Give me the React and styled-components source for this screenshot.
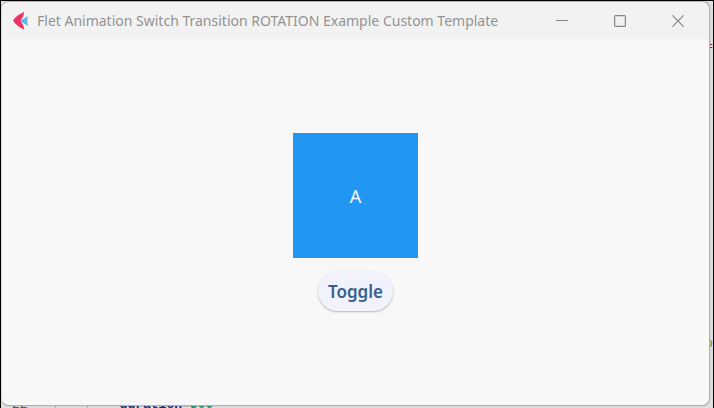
import React, { useState } from "react";
import styled, { createGlobalStyle } from "styled-components";

const GlobalStyle = createGlobalStyle`
  * { box-sizing: border-box; }
  html, body, #root { height: 100%; margin: 0; }
  body { overflow: hidden; font-family: "Noto Sans", "Open Sans", sans-serif; }
`;

const Desktop = styled.div`
  position: relative;
  display: flex;
  height: 100vh;
  padding: 1px 4px 2px 1px;
  overflow: hidden;
  background: #e2e2e2;
`;

const Edge = styled.div`
  position: absolute;
  inset: 0;
  border: solid #000;
  border-width: 1px 1px 0 1px;
`;

const CodeLine = styled.div`
  position: absolute;
  left: 12px;
  bottom: -5px;
  display: flex;
  font: 13px/16px "Liberation Mono", monospace;
  color: #555b66;
  white-space: pre;
`;

const Guide = styled.span`
  width: ${(p) => p.$width}px;
  border-right: 1px solid #b0b0b0;
`;

const Code = styled.span`
  color: ${(p) => p.$color};
  padding-left: ${(p) => p.$indent || 0}px;
  font-weight: 700;
`;

const Fragment = styled.span`
  position: absolute;
  right: 1px;
  top: ${(p) => p.$top}px;
  font: 13px/16px "Liberation Mono", monospace;
  color: ${(p) => p.$color};
`;

const Window = styled.main`
  position: relative;
  flex: 1;
  display: flex;
  flex-direction: column;
  overflow: hidden;
  background: #f8f8f8;
  border: 1px solid #b4b4b4;
  border-left-color: #d8d8d8;
  border-radius: 8px;
  box-shadow: 0 0 2px rgba(0, 0, 0, 0.25);
`;

const TitleBar = styled.header`
  flex: none;
  display: flex;
  align-items: center;
  height: 37px;
  padding: 0 2px 0 10px;
  background: #f2f2f2;
`;

const Title = styled.h1`
  flex: 1;
  margin: 0 0 0 8px;
  font-size: 14px;
  font-weight: 400;
  line-height: 20px;
  color: #929292;
  white-space: nowrap;
`;

const WindowButton = styled.button`
  display: grid;
  place-items: center;
  width: 58px;
  height: 36px;
  padding: 0;
  border: 0;
  background: transparent;
  color: #858585;
`;

const Content = styled.section`
  flex: 1;
  display: flex;
  flex-direction: column;
  align-items: center;
  justify-content: center;
  gap: 13px;
`;

const Tile = styled.div`
  display: grid;
  place-items: center;
  width: 125px;
  height: 125px;
  background: #2196f3;
  color: #f4f9ff;
  font-size: 18px;
  line-height: 24px;
`;

const ToggleButton = styled.button`
  height: 40px;
  padding: 2px 10px 0;
  border: 0;
  border-radius: 20px;
  background: #f1f2fb;
  box-shadow: 0 1px 2px rgba(0, 0, 0, 0.28);
  color: #36618e;
  font-family: inherit;
  font-size: 17px;
  font-weight: 600;
  line-height: 24px;
`;

const FletLogo = () => (
  <svg width="17" height="20" viewBox="0 0 17 20" aria-hidden="true">
    <path d="M16 5 8 10l8 5c-1-3-1-7 0-10Z" fill="#58b9e8" />
    <path d="M12 1C7 3 3 6 1 9.500 3 13 7 16.500 12 18.500c0-2-.5-4-1.500-5.500L8.500 10l2-3.500C11.500 5 12 3 12 1Z" fill="#ee3167" />
  </svg>
);

const MinimizeIcon = () => (
  <svg width="12" height="12" stroke="currentColor" aria-hidden="true">
    <path d="M0 5.500H12" />
  </svg>
);

const MaximizeIcon = () => (
  <svg width="12" height="12" fill="none" stroke="currentColor" strokeWidth="1.2" aria-hidden="true">
    <rect x=".6" y=".6" width="10.800" height="10.800" rx="1" />
  </svg>
);

const CloseIcon = () => (
  <svg width="12" height="12" stroke="currentColor" strokeWidth="1.2" aria-hidden="true">
    <path d="m.4.4 11.200 11.200M11.600.4.4 11.600" />
  </svg>
);

export default function App() {
  const [letter, setLetter] = useState("A");
  return (
    <Desktop>
      <GlobalStyle />
      <CodeLine aria-hidden="true">
        <span>22</span>
        <Guide $width={28} />
        <Guide $width={32} />
        <Code $indent={32} $color="#17277c">duration</Code>
        <Code $color="#8d8d8d">=</Code>
        <Code $color="#148a64">500</Code>
      </CodeLine>
      <Fragment aria-hidden="true" $top={39} $color="#b3123c">=</Fragment>
      <Fragment aria-hidden="true" $top={336} $color="#7a8a00">o</Fragment>
      <Edge />
      <Window>
        <TitleBar>
          <FletLogo />
          <Title>Flet Animation Switch Transition ROTATION Example Custom Template</Title>
          <WindowButton type="button" aria-label="Minimize"><MinimizeIcon /></WindowButton>
          <WindowButton type="button" aria-label="Maximize"><MaximizeIcon /></WindowButton>
          <WindowButton type="button" aria-label="Close"><CloseIcon /></WindowButton>
        </TitleBar>
        <Content>
          <Tile>{letter}</Tile>
          <ToggleButton type="button" onClick={() => setLetter(letter === "A" ? "B" : "A")}>
            Toggle
          </ToggleButton>
        </Content>
      </Window>
    </Desktop>
  );
}
